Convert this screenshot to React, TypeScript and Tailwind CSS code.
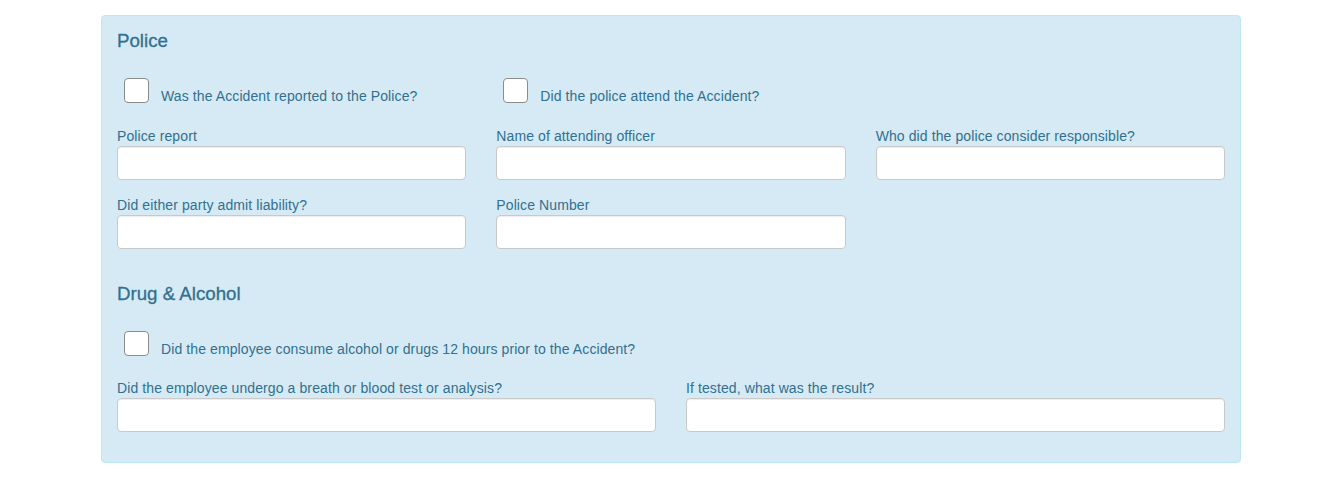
import React from 'react';

type Field = { label: string };

const font = { fontFamily: '"Liberation Sans", Arial, Helvetica, sans-serif' };

function Checkbox({ label }: { label: string }) {
  return (
    <label className="flex items-start pl-[7px]">
      <span className="block w-[25px] h-[25px] shrink-0 bg-white border border-[#8c8c8c] rounded-[4px]" />
      <span className="ml-[12px] mt-[9px] text-[14px] tracking-[0.1px] leading-[18px] text-[#31708f]">{label}</span>
    </label>
  );
}

function Input({ label }: Field) {
  return (
    <div>
      <label className="block text-[14px] tracking-[0.1px] leading-[18px] mb-[1px] text-[#31708f]">{label}</label>
      <input
        type="text"
        className="block w-full h-[34px] bg-white border border-[#c9c9c9] rounded-[4px] shadow-[inset_0_1px_1px_rgba(0,0,0,0.075)] outline-none"
      />
    </div>
  );
}

export default function App() {
  return (
    <div className="min-h-screen bg-white pt-[15px]" style={font}>
      <div className="ml-[101px] w-[1140px] bg-[#d6eaf5] border border-[#bce8f1] rounded-[4px] px-[15px] pt-[15px] pb-[30px]">
        {/* Police */}
        <h3 className="text-[18.7px] leading-[20px] [-webkit-text-stroke:0.3px] text-[#31708f]">Police</h3>

        <div className="mt-[27px] grid grid-cols-3 gap-x-[30px]">
          <Checkbox label="Was the Accident reported to the Police?" />
          <Checkbox label="Did the police attend the Accident?" />
        </div>

        <div className="mt-[22px] grid grid-cols-3 gap-x-[30px] gap-y-[16px]">
          <Input label="Police report" />
          <Input label="Name of attending officer" />
          <Input label="Who did the police consider responsible?" />
          <Input label="Did either party admit liability?" />
          <Input label="Police Number" />
        </div>

        {/* Drug & Alcohol */}
        <h3 className="mt-[35px] text-[18.7px] leading-[20px] [-webkit-text-stroke:0.3px] text-[#31708f]">Drug &amp; Alcohol</h3>

        <div className="mt-[27px]">
          <Checkbox label="Did the employee consume alcohol or drugs 12 hours prior to the Accident?" />
        </div>

        <div className="mt-[21px] grid grid-cols-2 gap-x-[30px]">
          <Input label="Did the employee undergo a breath or blood test or analysis?" />
          <Input label="If tested, what was the result?" />
        </div>
      </div>
    </div>
  );
}
